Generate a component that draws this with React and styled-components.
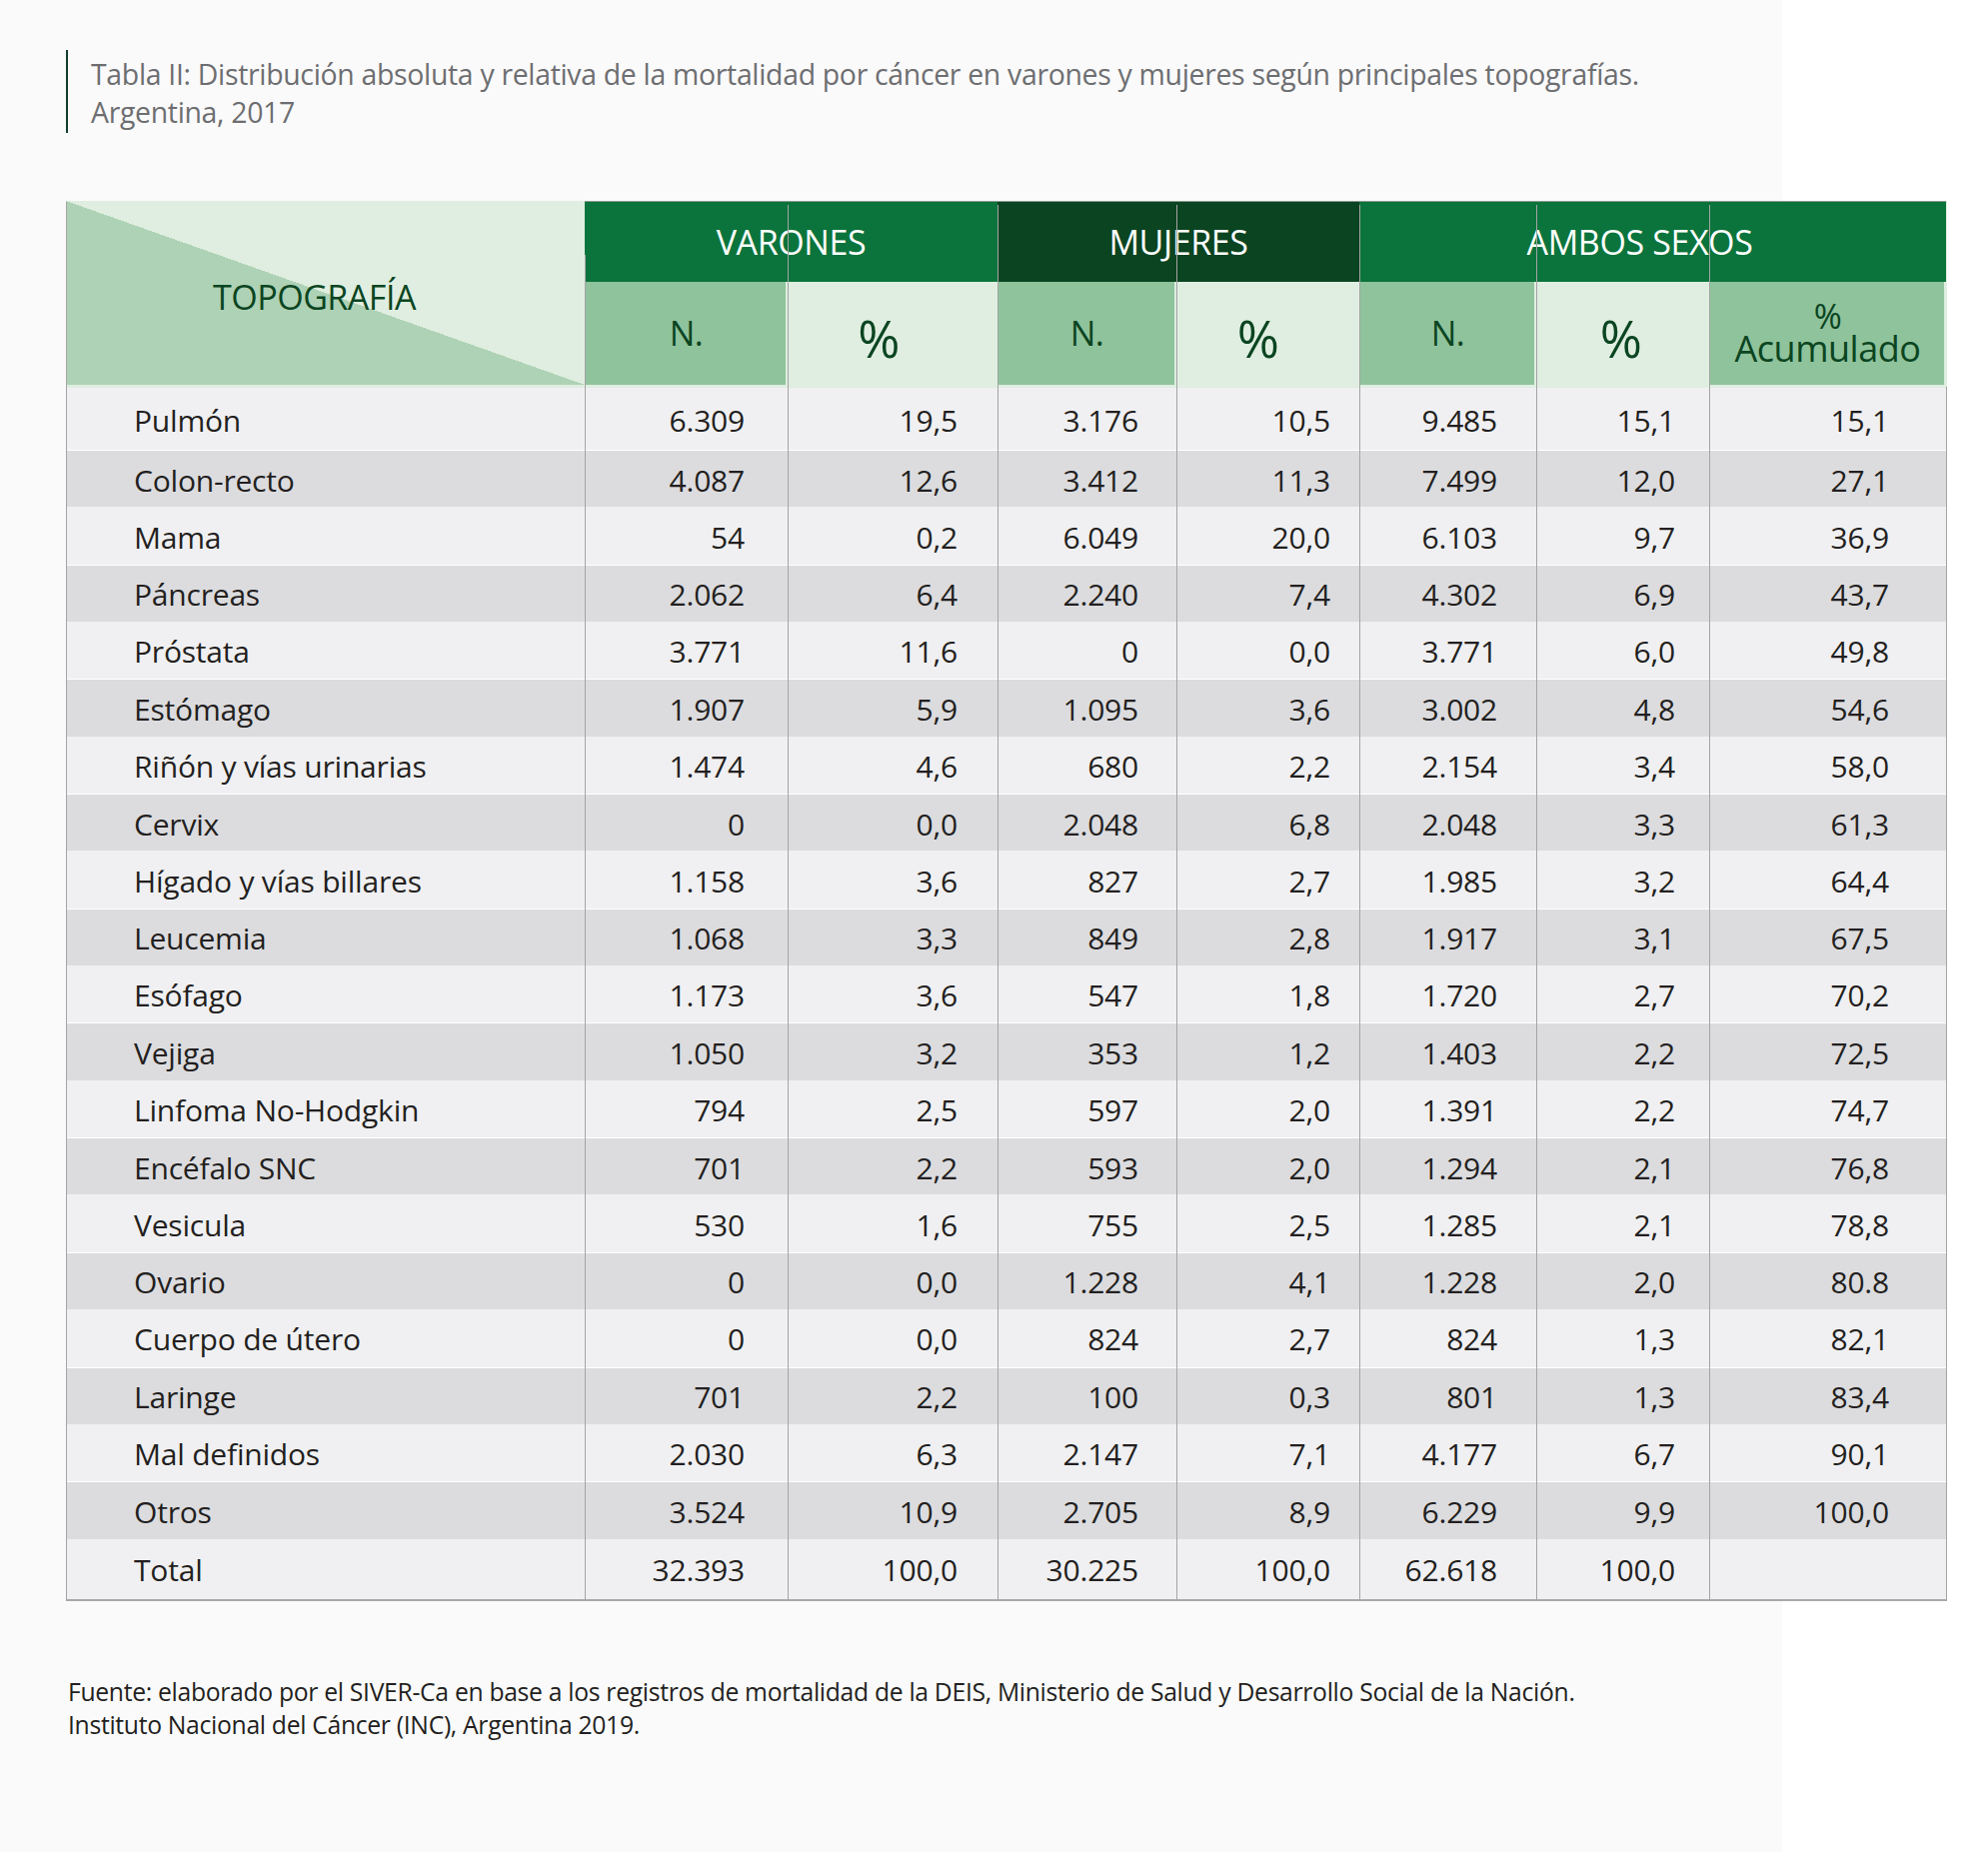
import React from 'react';
import styled, { createGlobalStyle } from 'styled-components';

const GlobalStyle = createGlobalStyle`
  * { box-sizing: border-box; }
  body {
    margin: 0;
    background: #ffffff;
    font-family: 'Open Sans', 'Noto Sans', sans-serif;
  }
`;

const COLS = [519, 203, 210, 179, 183, 177, 173, 237];
const PAD = [43, 40, 38, 29, 39, 34, 57];
const TEMPLATE = COLS.map((c) => `${c}px`).join(' ');

const rows = [
  ['Pulmón', '6.309', '19,5', '3.176', '10,5', '9.485', '15,1', '15,1'],
  ['Colon-recto', '4.087', '12,6', '3.412', '11,3', '7.499', '12,0', '27,1'],
  ['Mama', '54', '0,2', '6.049', '20,0', '6.103', '9,7', '36,9'],
  ['Páncreas', '2.062', '6,4', '2.240', '7,4', '4.302', '6,9', '43,7'],
  ['Próstata', '3.771', '11,6', '0', '0,0', '3.771', '6,0', '49,8'],
  ['Estómago', '1.907', '5,9', '1.095', '3,6', '3.002', '4,8', '54,6'],
  ['Riñón y vías urinarias', '1.474', '4,6', '680', '2,2', '2.154', '3,4', '58,0'],
  ['Cervix', '0', '0,0', '2.048', '6,8', '2.048', '3,3', '61,3'],
  ['Hígado y vías billares', '1.158', '3,6', '827', '2,7', '1.985', '3,2', '64,4'],
  ['Leucemia', '1.068', '3,3', '849', '2,8', '1.917', '3,1', '67,5'],
  ['Esófago', '1.173', '3,6', '547', '1,8', '1.720', '2,7', '70,2'],
  ['Vejiga', '1.050', '3,2', '353', '1,2', '1.403', '2,2', '72,5'],
  ['Linfoma No-Hodgkin', '794', '2,5', '597', '2,0', '1.391', '2,2', '74,7'],
  ['Encéfalo SNC', '701', '2,2', '593', '2,0', '1.294', '2,1', '76,8'],
  ['Vesicula', '530', '1,6', '755', '2,5', '1.285', '2,1', '78,8'],
  ['Ovario', '0', '0,0', '1.228', '4,1', '1.228', '2,0', '80.8'],
  ['Cuerpo de útero', '0', '0,0', '824', '2,7', '824', '1,3', '82,1'],
  ['Laringe', '701', '2,2', '100', '0,3', '801', '1,3', '83,4'],
  ['Mal definidos', '2.030', '6,3', '2.147', '7,1', '4.177', '6,7', '90,1'],
  ['Otros', '3.524', '10,9', '2.705', '8,9', '6.229', '9,9', '100,0'],
  ['Total', '32.393', '100,0', '30.225', '100,0', '62.618', '100,0', ''],
];

const rowHeight = (i) => (i === 0 ? 62 : i === rows.length - 1 ? 60 : 57.35);

const Sheet = styled.div`
  width: 1783px;
  min-height: 1853px;
  background: #fafafa;
  padding: 50px 0 0 66px;
`;

const Caption = styled.div`
  border-left: 2px solid #123d2a;
  padding: 5px 0 2px 23px;
  color: #6d6e71;
  font-size: 28.4px;
  line-height: 38px;
  letter-spacing: -0.3px;
`;

const TableWrap = styled.div`
  position: relative;
  width: 1882px;
  margin-top: 68px;
`;

const Grid = styled.div`
  display: grid;
  grid-template-columns: ${TEMPLATE};
  grid-template-rows: 81px 106px;
  background: #dfeee0;
  border-bottom: 2px solid #a9a9a9;
`;

const TopoCell = styled.div`
  grid-row: span 2;
  margin-bottom: 3px;
  display: flex;
  align-items: center;
  justify-content: center;
  padding-right: 22px;
  padding-top: 8px;
  background: linear-gradient(to top right, #aed2b5 50%, #dfeee0 50%);
  color: #0b4521;
  font-size: 34px;
  letter-spacing: -0.5px;
`;

const GroupHead = styled.div`
  grid-column: span ${(p) => p.span};
  background: ${(p) => (p.dark ? '#0b4421' : '#0b743c')};
  border-top: 1px solid #8a9a8e;
  display: flex;
  align-items: center;
  justify-content: center;
  padding-right: ${(p) => p.shift || 0}px;
  color: #ffffff;
  font-size: 34px;
  letter-spacing: -0.4px;
`;

const SubHead = styled.div`
  margin-bottom: 3px;
  display: flex;
  flex-direction: column;
  align-items: center;
  justify-content: center;
  background: ${(p) =>
    p.filled ? 'linear-gradient(to right, #8fc39c calc(100% - 2px), #dfeee0 0)' : '#dfeee0'};
  color: #0b4521;
  font-size: ${(p) => (p.big ? 51 : 34)}px;
  line-height: ${(p) => (p.big ? 1.1 : 0.97)};
  padding-top: ${(p) => (p.big ? 9 : 0)}px;
  padding-right: ${(p) => p.shift || 0}px;
  letter-spacing: -0.5px;
`;

const AcumLine = styled.div`
  display: block;
  font-size: ${(p) => (p.small ? 34 : 36)}px;
  line-height: ${(p) => (p.small ? 30 : 36)}px;
  height: ${(p) => (p.small ? 30 : 36)}px;
  overflow: visible;
`;

const Cell = styled.div`
  height: ${(p) => p.h}px;
  display: flex;
  align-items: center;
  justify-content: ${(p) => (p.label ? 'flex-start' : 'flex-end')};
  padding-left: ${(p) => (p.label ? 68 : 0)}px;
  padding-right: ${(p) => p.pad || 0}px;
  padding-top: 2px;
  background: ${(p) => (p.shade ? '#dcdcdf' : '#f0f0f2')};
  border-top: ${(p) => (p.shade ? '1px solid #ffffff' : 'none')};
  color: #231f20;
  font-size: 30px;
  letter-spacing: -0.2px;
  white-space: nowrap;
`;

const Lines = styled.div`
  position: absolute;
  inset: 0;
  display: flex;
  pointer-events: none;
`;

const Line = styled.div`
  width: ${(p) => p.w}px;
  margin-top: ${(p) => p.top}px;
  border-left: 1px solid #a4a4a4;
`;

const Footer = styled.div`
  margin-top: 74px;
  padding-left: 2px;
  color: #231f20;
  font-size: 24.7px;
  line-height: 33px;
  letter-spacing: -0.3px;
`;

export default function App() {
  return (
    <>
      <GlobalStyle />
      <Sheet>
        <Caption>
          Tabla II: Distribución absoluta y relativa de la mortalidad por cáncer en varones y mujeres según principales topografías.
          <br />
          Argentina, 2017
        </Caption>

        <TableWrap>
          <Grid>
            <TopoCell>TOPOGRAFÍA</TopoCell>
            <GroupHead span={2}>VARONES</GroupHead>
            <GroupHead span={2} dark>MUJERES</GroupHead>
            <GroupHead span={3} shift={26}>AMBOS SEXOS</GroupHead>

            <SubHead filled>N.</SubHead>
            <SubHead big shift={28}>%</SubHead>
            <SubHead filled>N.</SubHead>
            <SubHead big shift={20}>%</SubHead>
            <SubHead filled>N.</SubHead>
            <SubHead big shift={4}>%</SubHead>
            <SubHead filled>
              <AcumLine small>%</AcumLine>
              <AcumLine>Acumulado</AcumLine>
            </SubHead>

            {rows.map((r, i) =>
              r.map((v, j) => (
                <Cell
                  key={`${i}-${j}`}
                  h={rowHeight(i)}
                  shade={i % 2 === 1}
                  label={j === 0}
                  pad={j === 0 ? 0 : PAD[j - 1]}
                >
                  {v}
                </Cell>
              ))
            )}
          </Grid>

          <Lines>
            {COLS.map((w, k) => (
              <Line key={k} w={w} top={k === 0 ? 1 : k === 1 ? 54 : 4} />
            ))}
            <Line w={1} top={186} />
          </Lines>
        </TableWrap>

        <Footer>
          Fuente: elaborado por el SIVER-Ca en base a los registros de mortalidad de la DEIS, Ministerio de Salud y Desarrollo Social de la Nación.
          <br />
          Instituto Nacional del Cáncer (INC), Argentina 2019.
        </Footer>
      </Sheet>
    </>
  );
}
